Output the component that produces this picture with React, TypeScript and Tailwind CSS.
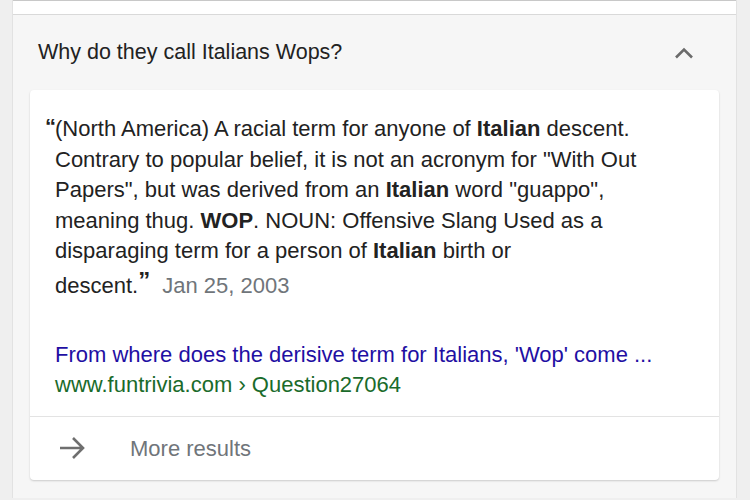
import React from "react";

function ChevronUp() {
  return (
    <svg width="20" height="12" viewBox="0 0 20 12" fill="none">
      <path d="M2 10.5 L10 2.5 L18 10.5" stroke="#6b6b6b" strokeWidth="2.6" />
    </svg>
  );
}

function ArrowRight() {
  return (
    <svg width="28" height="24" viewBox="0 0 28 24" fill="none">
      <path d="M2 12 H25 M15 2 L25 12 L15 22" stroke="#6f6f6f" strokeWidth="2.6" />
    </svg>
  );
}

export default function App() {
  return (
    <div
      className="w-[750px] h-[500px] overflow-hidden bg-[#efefef] flex"
      style={{ fontFamily: '"Liberation Sans", Arial, sans-serif' }}
    >
      <div className="ml-[12px] w-[725px] h-[498px] border-x border-[#e2e2e2] bg-[#f6f6f6] flex flex-col">
        {/* previous item, cut off */}
        <div className="h-[15px] bg-white border-t border-b border-[#d9d9d9] border-t-[#c8c8c8]" />

        {/* question header */}
        <div className="h-[75px] flex items-center justify-between pl-[25px] pr-[42px]">
          <span className="text-[21.5px] text-[#222]">Why do they call Italians Wops?</span>
          <ChevronUp />
        </div>

        {/* answer card */}
        <div className="mx-[17px] bg-white rounded-[4px] shadow-[0_1px_2px_rgba(0,0,0,0.18)] flex flex-col">
          <div className="pl-[25px] pr-[20px] pt-[24px] pb-[16px]">
            <div className="text-[22px] leading-[30.6px] text-[#222]">
              <span className="inline-block w-[10px] -ml-[10px] text-[22px] font-bold leading-none align-[2px]">
                “
              </span>
              (North America) A racial term for anyone of <b>Italian</b> descent.
              <br />
              Contrary to popular belief, it is not an acronym for "With Out
              <br />
              Papers", but was derived from an <b>Italian</b> word "guappo",
              <br />
              meaning thug. <b>WOP</b>. NOUN: Offensive Slang Used as a
              <br />
              disparaging term for a person of <b>Italian</b> birth or
              <br />
              <span className="inline-block mt-[2px]">
                descent.
                <span className="text-[24px] font-bold leading-none align-[4px]">”</span>
                <span className="ml-[12px] text-[#70757a]">Jan 25, 2003</span>
              </span>
            </div>
            <div className="mt-[38px] text-[22px] leading-[30px]">
              <div className="text-[#1f0fa3]">
                From where does the derisive term for Italians, 'Wop' come ...
              </div>
              <div className="text-[#1a6b2b]">www.funtrivia.com › Question27064</div>
            </div>
          </div>
          <div className="h-[64px] border-t border-[#e3e3e3] flex items-center pl-[28px]">
            <ArrowRight />
            <span className="ml-[44px] text-[22px] text-[#70757a]">More results</span>
          </div>
        </div>
      </div>
    </div>
  );
}
